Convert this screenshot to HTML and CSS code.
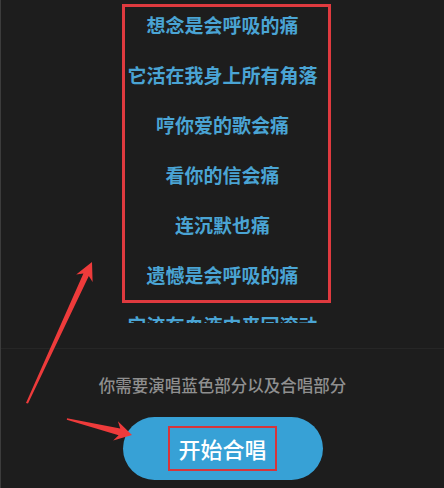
FILE: index.html
```html
<!DOCTYPE html>
<html lang="zh-CN">
<head>
<meta charset="utf-8">
<link rel="stylesheet" href="styles.css">
</head>
<body>
<div class="page">
  <div class="lyrics">
    <p class="line">想念是会呼吸的痛</p>
    <p class="line">它活在我身上所有角落</p>
    <p class="line">哼你爱的歌会痛</p>
    <p class="line">看你的信会痛</p>
    <p class="line">连沉默也痛</p>
    <p class="line">遗憾是会呼吸的痛</p>
    <p class="line">它流在血液中来回滚动</p>
  </div>
  <div class="divider"></div>
  <p class="hint">你需要演唱蓝色部分以及合唱部分</p>
  <button class="start"><span class="start-label">开始合唱</span></button>

  <div class="lyrics-mark"></div>
  <svg class="arrows" width="444" height="488" viewBox="0 0 444 488">
    <polygon points="26,403 83.4,273.4 76.2,274.5 92,262 92.6,282.1 88.8,276 28,403.5"/>
    <polygon points="67,418.3 120.2,428.5 117.9,421.2 132,435 113.2,440.6 118.6,435.3 66.8,419.8"/>
  </svg>
</div>
</body>
</html>
```

FILE: styles.css
```css
html, body {
  margin: 0;
  padding: 0;
  background: #1d1d1d;
}

.page {
  position: relative;
  width: 444px;
  height: 488px;
  overflow: hidden;
  box-sizing: border-box;
  border-left: 1px solid #3c3c3c;
  font-family: "Noto Sans CJK SC", "Noto Sans", sans-serif;
  display: flex;
  flex-direction: column;
  align-items: center;
}

.lyrics {
  width: 100%;
  height: 323px;
  overflow: hidden;
  padding-top: 13px;
  box-sizing: border-box;
  display: flex;
  flex-direction: column;
  align-items: center;
  gap: 26px;
}

.line {
  margin: 0;
  font-size: 19px;
  line-height: 24px;
  font-weight: 700;
  color: #4aa4d4;
  white-space: nowrap;
}

.divider {
  width: 100%;
  height: 1px;
  margin-top: 25px;
  background: #262626;
}

.hint {
  margin: 24px 0 0;
  font-size: 16.5px;
  line-height: 24px;
  font-weight: 500;
  color: #8f8f8f;
}

.start {
  margin-top: 20px;
  width: 200px;
  height: 63px;
  border: none;
  border-radius: 32px;
  background: #37a1d6;
  display: flex;
  align-items: center;
  justify-content: center;
  padding: 0;
  font-family: inherit;
}

.start-label {
  border: 2px solid #d6353b;
  padding: 0 8px;
  height: 41px;
  line-height: 41px;
  font-size: 22px;
  font-weight: 500;
  color: #ffffff;
}

.lyrics-mark {
  position: absolute;
  left: 121px;
  top: 4px;
  width: 209px;
  height: 299px;
  box-sizing: border-box;
  border: 3px solid #df3a3f;
}

.arrows {
  position: absolute;
  left: -1px;
  top: 0;
}

.arrows polygon {
  fill: #ee3b3b;
}
```
